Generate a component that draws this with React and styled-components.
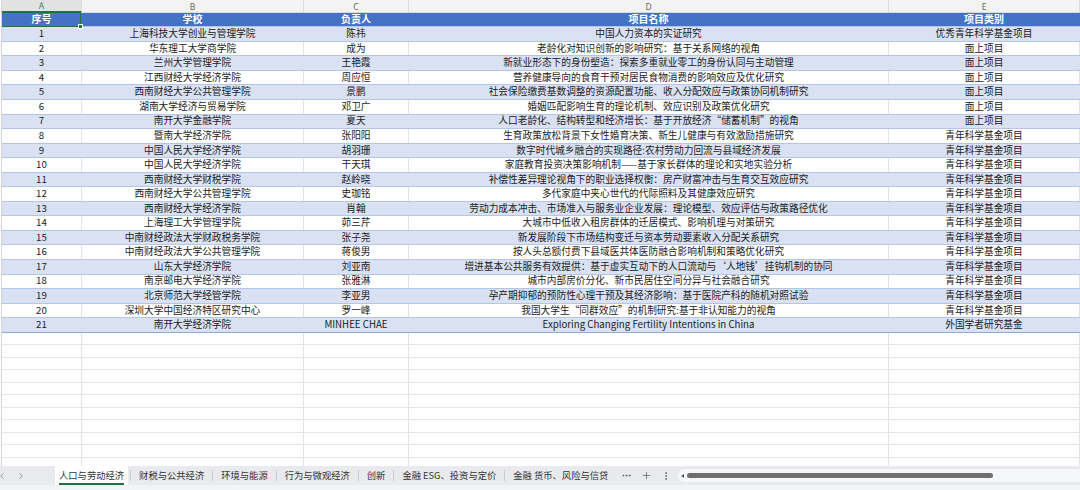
import React from 'react';
import styled, { createGlobalStyle } from 'styled-components';
import {
  ChevronLeft, ChevronRight, Ellipsis, Plus, EllipsisVertical,
} from 'lucide-react';

const GlobalStyle = createGlobalStyle`
  html, body {
    margin: 0;
    padding: 0;
    background: #ffffff;
  }
  body {
    font-family: "Noto Sans CJK SC", "Noto Sans", sans-serif;
    color: #222222;
  }
`;

const COLUMNS = '80px 222px 105px 480px 1fr';

const rows = [
  ['1', '上海科技大学创业与管理学院', '陈祎', '中国人力资本的实证研究', '优秀青年科学基金项目'],
  ['2', '华东理工大学商学院', '成为', '老龄化对知识创新的影响研究：基于关系网络的视角', '面上项目'],
  ['3', '兰州大学管理学院', '王艳霞', '新就业形态下的身份塑造：探索多重就业零工的身份认同与主动管理', '面上项目'],
  ['4', '江西财经大学经济学院', '周应恒', '营养健康导向的食育干预对居民食物消费的影响效应及优化研究', '面上项目'],
  ['5', '西南财经大学公共管理学院', '景鹏', '社会保险缴费基数调整的资源配置功能、收入分配效应与政策协同机制研究', '面上项目'],
  ['6', '湖南大学经济与贸易学院', '邓卫广', '婚姻匹配影响生育的理论机制、效应识别及政策优化研究', '面上项目'],
  ['7', '南开大学金融学院', '夏天', '人口老龄化、结构转型和经济增长：基于开放经济“储蓄机制”的视角', '面上项目'],
  ['8', '暨南大学经济学院', '张阳阳', '生育政策放松背景下女性婚育决策、新生儿健康与有效激励措施研究', '青年科学基金项目'],
  ['9', '中国人民大学经济学院', '胡羽珊', '数字时代城乡融合的实现路径:农村劳动力回流与县域经济发展', '青年科学基金项目'],
  ['10', '中国人民大学经济学院', '干天琪', '家庭教育投资决策影响机制——基于家长群体的理论和实地实验分析', '青年科学基金项目'],
  ['11', '西南财经大学财税学院', '赵岭晓', '补偿性差异理论视角下的职业选择权衡：房产财富冲击与生育交互效应研究', '青年科学基金项目'],
  ['12', '西南财经大学公共管理学院', '史珈铭', '多代家庭中夹心世代的代际照料及其健康效应研究', '青年科学基金项目'],
  ['13', '西南财经大学经济学院', '肖翰', '劳动力成本冲击、市场准入与服务业企业发展：理论模型、效应评估与政策路径优化', '青年科学基金项目'],
  ['14', '上海理工大学管理学院', '茆三芹', '大城市中低收入租房群体的迁居模式、影响机理与对策研究', '青年科学基金项目'],
  ['15', '中南财经政法大学财政税务学院', '张子尧', '新发展阶段下市场结构变迁与资本劳动要素收入分配关系研究', '青年科学基金项目'],
  ['16', '中南财经政法大学公共管理学院', '蒋俊男', '按人头总额付费下县域医共体医防融合影响机制和策略优化研究', '青年科学基金项目'],
  ['17', '山东大学经济学院', '刘亚南', '增进基本公共服务有效提供：基于虚实互动下的人口流动与‘人地钱’挂钩机制的协同', '青年科学基金项目'],
  ['18', '南京邮电大学经济学院', '张雅淋', '城市内部房价分化、新市民居住空间分异与社会融合研究', '青年科学基金项目'],
  ['19', '北京师范大学经管学院', '李亚男', '孕产期抑郁的预防性心理干预及其经济影响：基于医院产科的随机对照试验', '青年科学基金项目'],
  ['20', '深圳大学中国经济特区研究中心', '罗一峰', '我国大学生“同群效应”的机制研究:基于非认知能力的视角', '青年科学基金项目'],
  ['21', '南开大学经济学院', 'MINHEE CHAE', 'Exploring Changing Fertility Intentions in China', '外国学者研究基金'],
];

const tabs = ['人口与劳动经济', '财税与公共经济', '环境与能源', '行为与微观经济', '创新', '金融 ESG、投资与定价', '金融 货币、风险与信贷'];

const Styled = {
  Page: styled.div`
    display: flex;
    flex-flow: column;
    width: 1080px;
    height: 490px;
    overflow: hidden;
  `,
  Grid: styled.div`
    flex: 1;
    overflow: hidden;
    margin-left: 1px;
    border-left: 1px solid #d4d4d4;
  `,
  LetterRow: styled.div`
    display: grid;
    grid-template-columns: ${COLUMNS};
    height: 12.7px;
    background: #f3f3f3;
    border-bottom: 1px solid #dadada;
    box-sizing: border-box;
  `,
  Letter: styled.div`
    display: flex;
    align-items: center;
    justify-content: center;
    font-family: "Noto Sans", sans-serif;
    font-size: 8.5px;
    color: ${({ selected }) => (selected ? '#3f7d57' : '#666666')};
    background: ${({ selected }) => (selected ? '#e2e2e2' : 'transparent')};
    border-right: 1px solid #dcdcdc;
    border-bottom: ${({ selected }) => (selected ? '1px solid #217346' : 'none')};
  `,
  Row: styled.div`
    display: grid;
    grid-template-columns: ${COLUMNS};
    height: ${({ empty }) => (empty ? '12.5px' : '14.55px')};
    box-sizing: border-box;
    background: ${({ head, band }) => (head ? '#4472c4' : band ? '#d9e1f2' : '#ffffff')};
    border-bottom: 1px solid ${({ empty, last }) => (empty ? '#e6e6e6' : last ? '#8ea9db' : '#b4c6e7')};
  `,
  Cell: styled.div`
    position: relative;
    display: flex;
    align-items: center;
    justify-content: center;
    min-width: 0;
    white-space: nowrap;
    font-size: ${({ head }) => (head ? '10px' : '9.7px')};
    line-height: 1;
    font-weight: ${({ head }) => (head ? 700 : 400)};
    color: ${({ head }) => (head ? '#ffffff' : '#222222')};
    border-right: 1px solid ${({ band, head }) => (band || head ? 'transparent' : '#e3e3e3')};
  `,
  Selection: styled.span`
    position: absolute;
    inset: -1px 0 -1px -1px;
    border: 1.5px solid #217346;
    pointer-events: none;
    &::after {
      content: '';
      position: absolute;
      right: -3px;
      bottom: -3px;
      width: 3px;
      height: 3px;
      background: #217346;
      border: 1px solid #ffffff;
    }
  `,
  Footer: styled.div`
    height: 24px;
    padding-bottom: 5px;
    box-sizing: border-box;
    background: #f2f3f5;
  `,
  TabBar: styled.div`
    display: flex;
    align-items: center;
    height: 19px;
    background: #e8eaee;
    font-size: 9.3px;
    color: #333333;
  `,
  Nav: styled.div`
    display: flex;
    align-items: center;
    gap: 9px;
    width: 58px;
    margin-left: -3px;
    color: #666666;
  `,
  Tab: styled.div`
    display: flex;
    align-items: center;
    height: 100%;
    padding: ${({ active }) => (active ? '0 4px' : '0 8px')};
    margin-right: ${({ active }) => (active ? '2px' : '0')};
    background: ${({ active }) => (active ? '#ffffff' : 'transparent')};
    white-space: nowrap;
  `,
  TabLabel: styled.span`
    padding: 1px 0;
    border-bottom: 2px solid ${({ active }) => (active ? '#217346' : 'transparent')};
  `,
  Divider: styled.span`
    width: 1px;
    height: 11px;
    background: #c9ccd2;
  `,
  Tool: styled.span`
    display: flex;
    align-items: center;
    justify-content: center;
    width: 20px;
    color: #555555;
  `,
  Track: styled.div`
    flex: 1;
    display: flex;
    align-items: center;
    gap: 3px;
    height: 13px;
    margin-left: 2px;
    padding-left: 3px;
    border-radius: 7px 0 0 7px;
    background: #f6f7f9;
  `,
  Arrow: styled.span`
    width: 0;
    height: 0;
    border-top: 2.5px solid transparent;
    border-bottom: 2.5px solid transparent;
    border-right: 3.5px solid #555555;
  `,
  Thumb: styled.span`
    width: 306px;
    height: 5px;
    border-radius: 3px;
    background: #6f6f6f;
  `,
};

function Sheet() {
  const emptyRows = Array.from({ length: 11 }, (_, i) => i);

  return (
    <Styled.Grid>
      <Styled.LetterRow>
        {['A', 'B', 'C', 'D', 'E'].map((letter) => (
          <Styled.Letter key={letter} selected={letter === 'A'}>
            {letter}
          </Styled.Letter>
        ))}
      </Styled.LetterRow>
      <Styled.Row head>
        {['序号', '学校', '负责人', '项目名称', '项目类别'].map((title, i) => (
          <Styled.Cell key={title} head>
            {title}
            {i === 0 && <Styled.Selection />}
          </Styled.Cell>
        ))}
      </Styled.Row>
      {rows.map((row, index) => (
        <Styled.Row key={row[0]} band={index % 2 === 0} last={index === rows.length - 1}>
          {row.map((value, i) => (
            <Styled.Cell key={i} band={index % 2 === 0}>
              {value}
            </Styled.Cell>
          ))}
        </Styled.Row>
      ))}
      {emptyRows.map((n) => (
        <Styled.Row key={`empty-${n}`} empty>
          {[0, 1, 2, 3, 4].map((i) => <Styled.Cell key={i} />)}
        </Styled.Row>
      ))}
    </Styled.Grid>
  );
}

function SheetTabs() {
  return (
    <Styled.Footer>
      <Styled.TabBar>
        <Styled.Nav>
          <ChevronLeft size={10} strokeWidth={1.5} />
          <ChevronRight size={10} strokeWidth={1.5} />
        </Styled.Nav>
        {tabs.map((tab, i) => (
          <React.Fragment key={tab}>
            {i > 0 && <Styled.Divider />}
            <Styled.Tab active={i === 0}>
              <Styled.TabLabel active={i === 0}>{tab}</Styled.TabLabel>
            </Styled.Tab>
          </React.Fragment>
        ))}
        <Styled.Tool><Ellipsis size={11} strokeWidth={2} /></Styled.Tool>
        <Styled.Tool><Plus size={11} strokeWidth={1.5} /></Styled.Tool>
        <Styled.Tool><EllipsisVertical size={10} strokeWidth={2} /></Styled.Tool>
        <Styled.Track>
          <Styled.Arrow />
          <Styled.Thumb />
        </Styled.Track>
      </Styled.TabBar>
    </Styled.Footer>
  );
}

export default function App() {
  return (
    <>
      <GlobalStyle />
      <Styled.Page>
        <Sheet />
        <SheetTabs />
      </Styled.Page>
    </>
  );
}
